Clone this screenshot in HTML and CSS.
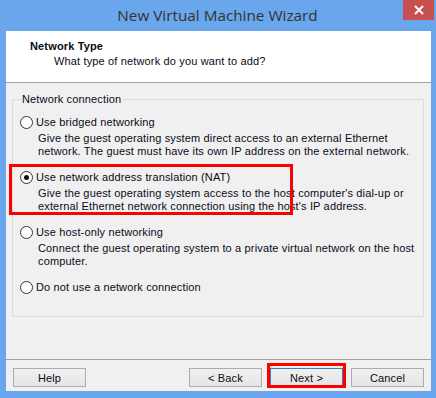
FILE: index.html
```html
<!DOCTYPE html>
<html lang="en">
<head>
  <meta charset="UTF-8"/>
  <title>New Virtual Machine Wizard</title>
  <link rel="stylesheet" href="styles.css">
</head>
<body>

  <div class="window">
    <div class="titlebar">
      <span class="title">New Virtual Machine Wizard</span>
      <div class="close-btn">
        <svg width="10" height="10" viewBox="0 0 10 10">
          <path d="M1 1 L9 9 M9 1 L1 9" stroke="#fff" stroke-width="2" fill="none"/>
        </svg>
      </div>
    </div>

    <div class="client">
      <div class="header">
        <h1>Network Type</h1>
        <p>What type of network do you want to add?</p>
      </div>

      <div class="content">
        <div class="group">
          <span class="legend">Network connection</span>

          <div class="option">
            <div class="opt-row"><span class="radio"></span>Use bridged networking</div>
            <p class="desc">Give the guest operating system direct access to an external Ethernet<br>network. The guest must have its own IP address on the external network.</p>
          </div>

          <div class="option marked">
            <div class="opt-row"><span class="radio checked"></span>Use network address translation (NAT)</div>
            <p class="desc">Give the guest operating system access to the host computer's dial-up or<br>external Ethernet network connection using the host's IP address.</p>
            <div class="mark mark-nat"></div>
          </div>

          <div class="option">
            <div class="opt-row"><span class="radio"></span>Use host-only networking</div>
            <p class="desc">Connect the guest operating system to a private virtual network on the host<br>computer.</p>
          </div>

          <div class="option">
            <div class="opt-row"><span class="radio"></span>Do not use a network connection</div>
          </div>
        </div>
      </div>

      <div class="footer">
        <button class="btn">Help</button>
        <div class="spacer"></div>
        <button class="btn">&lt; Back</button>
        <button class="btn btn-default">Next &gt;<span class="mark mark-next"></span></button>
        <button class="btn">Cancel</button>
      </div>
    </div>
  </div>

</body>
</html>
```

FILE: styles.css
```css
:root {
  --frame: #6aa6ec;
  --face: #f0f0f0;
  --text: #0b0b18;
  --mark: #ff0000;
}

* {
  margin: 0;
  padding: 0;
  box-sizing: border-box;
}

body {
  width: 436px;
  height: 398px;
  background: var(--frame);
  font-family: "Liberation Sans", Arial, sans-serif;
  font-size: 11px;
  letter-spacing: 0.15px;
  color: var(--text);
  overflow: hidden;
}

.window {
  height: 398px;
  padding: 0 5px 7px 6px;
  display: flex;
  flex-direction: column;
}

.titlebar {
  height: 31px;
  position: relative;
  display: flex;
  justify-content: center;
}

.title {
  font-family: "Open Sans", "Noto Sans", sans-serif;
  font-size: 15.3px;
  letter-spacing: 0;
  color: #333;
  line-height: 30px;
  margin-left: -2px;
}

.close-btn {
  position: absolute;
  top: 0;
  right: -3px;
  width: 31px;
  height: 20px;
  background: #c75050;
  display: flex;
  align-items: center;
  justify-content: center;
}

.client {
  flex: 1;
  background: var(--face);
  display: flex;
  flex-direction: column;
}

.header {
  height: 52px;
  background: #fff;
  border-bottom: 1px solid #a0a0a0;
  padding: 9px 0 0 24px;
}

.header h1 {
  font-size: 11px;
  font-weight: bold;
  line-height: 13px;
}

.header p {
  line-height: 13px;
  margin-top: 2px;
  padding-left: 24px;
}

.content {
  flex: 1;
  padding: 16px 7px 0 6px;
}

.group {
  border: 1px solid #dcdcdc;
  padding: 0 7px 22px 7px;
}

.legend {
  display: block;
  width: max-content;
  margin: -7px 0 0 1px;
  padding: 0 1px;
  background: var(--face);
  line-height: 13px;
}

.option {
  margin-top: 13px;
  position: relative;
}

.legend + .option {
  margin-top: 10px;
}

.opt-row {
  display: flex;
  align-items: center;
  line-height: 13px;
  height: 13px;
}

.radio {
  width: 13px;
  height: 13px;
  border: 1px solid #333;
  border-radius: 50%;
  background: #fff;
  margin-right: 3px;
  display: flex;
  align-items: center;
  justify-content: center;
}

.radio.checked::after {
  content: "";
  width: 5px;
  height: 5px;
  border-radius: 50%;
  background: #111;
}

.desc {
  line-height: 13px;
  margin-top: 3px;
  padding-left: 18px;
}

.mark {
  position: absolute;
  border: 3px solid var(--mark);
  pointer-events: none;
}

.mark-nat {
  left: -11px;
  top: -7px;
  width: 284px;
  height: 51px;
}

.footer {
  border-top: 1px solid #a0a0a0;
  padding: 8px 7px 4px 7px;
  display: flex;
  gap: 8px;
}

.spacer {
  flex: 1;
}

.btn {
  width: 73px;
  height: 19px;
  border: 1px solid #acacac;
  background: linear-gradient(#f0f0f0, #e5e5e5);
  font-family: "Liberation Sans", Arial, sans-serif;
  font-size: 11px;
  letter-spacing: 0.15px;
  color: var(--text);
  position: relative;
}

.btn-default {
  border-color: #3c7fb1;
}

.mark-next {
  left: -4px;
  top: -6px;
  width: 79px;
  height: 25px;
}
```
